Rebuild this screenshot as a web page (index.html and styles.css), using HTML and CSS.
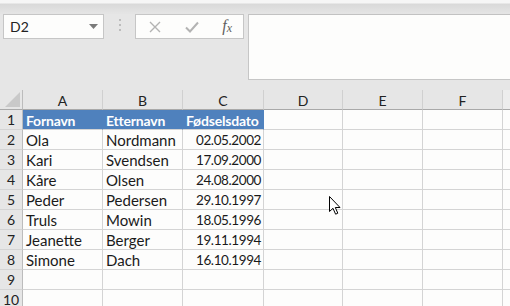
FILE: index.html
```html
<!DOCTYPE html>
<html lang="nb">

<head>
    <meta charset="UTF-8">
    <meta name="viewport" content="width=device-width, initial-scale=1.0">
    <title>Regneark</title>
    <link rel="stylesheet" href="styles.css">
</head>

<body>
    <div class="topp"></div>

    <div class="formellinje">
        <div class="navnboks">
            <span>D2</span>
            <svg width="9" height="5" viewBox="0 0 9 5"><path d="M0 0h9L4.5 5z" fill="#7a7a7a"/></svg>
        </div>
        <div class="prikker"><i></i><i></i><i></i></div>
        <div class="knapper">
            <svg width="12" height="12" viewBox="0 0 12 12"><path d="M1 1l10 10M11 1L1 11" stroke="#b3b3b3" stroke-width="1.4" fill="none"/></svg>
            <svg width="14" height="12" viewBox="0 0 14 12"><path d="M1 6.5l4 4L13 1.5" stroke="#b3b3b3" stroke-width="2" fill="none"/></svg>
            <span class="fx">f<sub>x</sub></span>
        </div>
        <div class="innhold"></div>
    </div>

    <section class="ark">
        <div class="hjorne"><svg width="15" height="15" viewBox="0 0 15 15"><path d="M15 0V15H0z" fill="#c9c9c9"/></svg></div>
        <div class="kol">A</div>
        <div class="kol">B</div>
        <div class="kol">C</div>
        <div class="kol">D</div>
        <div class="kol">E</div>
        <div class="kol">F</div>
        <div class="kol rest"></div>

        <div class="rad">1</div>
        <div class="celle tittel">Fornavn</div>
        <div class="celle tittel">Etternavn</div>
        <div class="celle tittel">Fødselsdato</div>
        <div class="celle"></div><div class="celle"></div><div class="celle"></div><div class="celle rest"></div>

        <div class="rad">2</div>
        <div class="celle">Ola</div><div class="celle">Nordmann</div><div class="celle dato">02.05.2002</div>
        <div class="celle"></div><div class="celle"></div><div class="celle"></div><div class="celle rest"></div>

        <div class="rad">3</div>
        <div class="celle">Kari</div><div class="celle">Svendsen</div><div class="celle dato">17.09.2000</div>
        <div class="celle"></div><div class="celle"></div><div class="celle"></div><div class="celle rest"></div>

        <div class="rad">4</div>
        <div class="celle">Kåre</div><div class="celle">Olsen</div><div class="celle dato">24.08.2000</div>
        <div class="celle"></div><div class="celle"></div><div class="celle"></div><div class="celle rest"></div>

        <div class="rad">5</div>
        <div class="celle">Peder</div><div class="celle">Pedersen</div><div class="celle dato">29.10.1997</div>
        <div class="celle"></div><div class="celle"></div><div class="celle"></div><div class="celle rest"></div>

        <div class="rad">6</div>
        <div class="celle">Truls</div><div class="celle">Mowin</div><div class="celle dato">18.05.1996</div>
        <div class="celle"></div><div class="celle"></div><div class="celle"></div><div class="celle rest"></div>

        <div class="rad">7</div>
        <div class="celle">Jeanette</div><div class="celle">Berger</div><div class="celle dato">19.11.1994</div>
        <div class="celle"></div><div class="celle"></div><div class="celle"></div><div class="celle rest"></div>

        <div class="rad">8</div>
        <div class="celle">Simone</div><div class="celle">Dach</div><div class="celle dato">16.10.1994</div>
        <div class="celle"></div><div class="celle"></div><div class="celle"></div><div class="celle rest"></div>

        <div class="rad">9</div>
        <div class="celle"></div><div class="celle"></div><div class="celle"></div>
        <div class="celle"></div><div class="celle"></div><div class="celle"></div><div class="celle rest"></div>

        <div class="rad">10</div>
        <div class="celle"></div><div class="celle"></div><div class="celle"></div>
        <div class="celle"></div><div class="celle"></div><div class="celle"></div><div class="celle rest"></div>

        <svg class="peker" width="12" height="19" viewBox="0 0 12 19">
            <path d="M0.5 0.5V15.5L4 12.3L6.6 18.2L8.8 17.2L6.3 11.5H11z" fill="#fff" stroke="#000" stroke-width="1" stroke-linejoin="round"/>
        </svg>
    </section>
</body>

</html>
```

FILE: styles.css
```css
* {
    box-sizing: border-box;
}

body {
    margin: 0;
    width: 510px;
    height: 306px;
    overflow: hidden;
    background-color: #e6e6e6;
    font-family: Lato, "Open Sans", sans-serif;
    color: #1a1a1a;
}

.topp {
    height: 14px;
    background: linear-gradient(#f6f6f6 0, #f6f6f6 3px, #d9d9d9 4px, #e4e4e4 13px);
}

.formellinje {
    display: flex;
    align-items: flex-start;
    height: 76px;
}

.navnboks {
    margin-left: 3px;
    width: 101px;
    height: 25px;
    border: 1px solid #c6c6c6;
    background-color: #fdfdfc;
    display: flex;
    align-items: center;
    justify-content: space-between;
    padding: 0 5px 0 6px;
    font-size: 14px;
    color: #222;
}

.prikker {
    width: 31px;
    display: flex;
    flex-direction: column;
    align-items: center;
    gap: 3px;
    padding-top: 5px;
}

.prikker i {
    width: 2px;
    height: 2px;
    background-color: #bcbcbc;
}

.knapper {
    width: 109px;
    height: 25px;
    border: 1px solid #c6c6c6;
    background-color: #fdfdfc;
    display: flex;
    align-items: center;
    justify-content: space-between;
    padding: 0 11px 0 13px;
}

.fx {
    font-family: "Liberation Serif", serif;
    font-style: italic;
    font-size: 16px;
    color: #5f5f5f;
}

.fx sub {
    font-size: 12px;
    vertical-align: -1px;
}

.innhold {
    margin-left: 4px;
    flex: 1;
    height: 66px;
    border-top: 1px solid #c2c2c2;
    border-left: 1px solid #c6c6c6;
    border-bottom: 1px solid #c6c6c6;
    background-color: #fdfdfc;
}

.ark {
    position: relative;
    display: grid;
    grid-template-columns: 23px 80px 80px 81px 79px 80px 80px 7px;
    grid-auto-rows: 20px;
    background-color: #fdfdfc;
    font-size: 15px;
}

.hjorne,
.kol {
    background-color: #e6e6e6;
    border-bottom: 1px solid #a9a9a9;
    border-right: 1px solid #d0d0d0;
}

.hjorne {
    border-right-color: #bcbcbc;
    display: flex;
    align-items: flex-end;
    justify-content: flex-end;
    padding: 0 2px 2px 0;
}

.kol {
    text-align: center;
    font-size: 14px;
    line-height: 21px;
    color: #222;
}

.kol.rest {
    border-right: none;
    background-color: #ededed;
}

.rad {
    background-color: #e6e6e6;
    border-right: 1px solid #bcbcbc;
    border-bottom: 1px solid #d4d4d4;
    text-align: center;
    font-size: 14px;
    line-height: 20px;
    color: #222;
}

.celle {
    border-right: 1px solid #d4d4d4;
    border-bottom: 1px solid #d4d4d4;
    padding: 0 3px;
    line-height: 21px;
    white-space: nowrap;
    overflow: hidden;
}

.celle.rest {
    border-right: none;
}

.tittel {
    background-color: #4f81bd;
    color: #fff;
    font-weight: bold;
    font-size: 14px;
    letter-spacing: -0.2px;
    border-right-color: #4f81bd;
}

.dato {
    text-align: right;
    padding-right: 2px;
    font-size: 13.5px;
    letter-spacing: -0.4px;
}

.peker {
    position: absolute;
    left: 329px;
    top: 106px;
}
```
